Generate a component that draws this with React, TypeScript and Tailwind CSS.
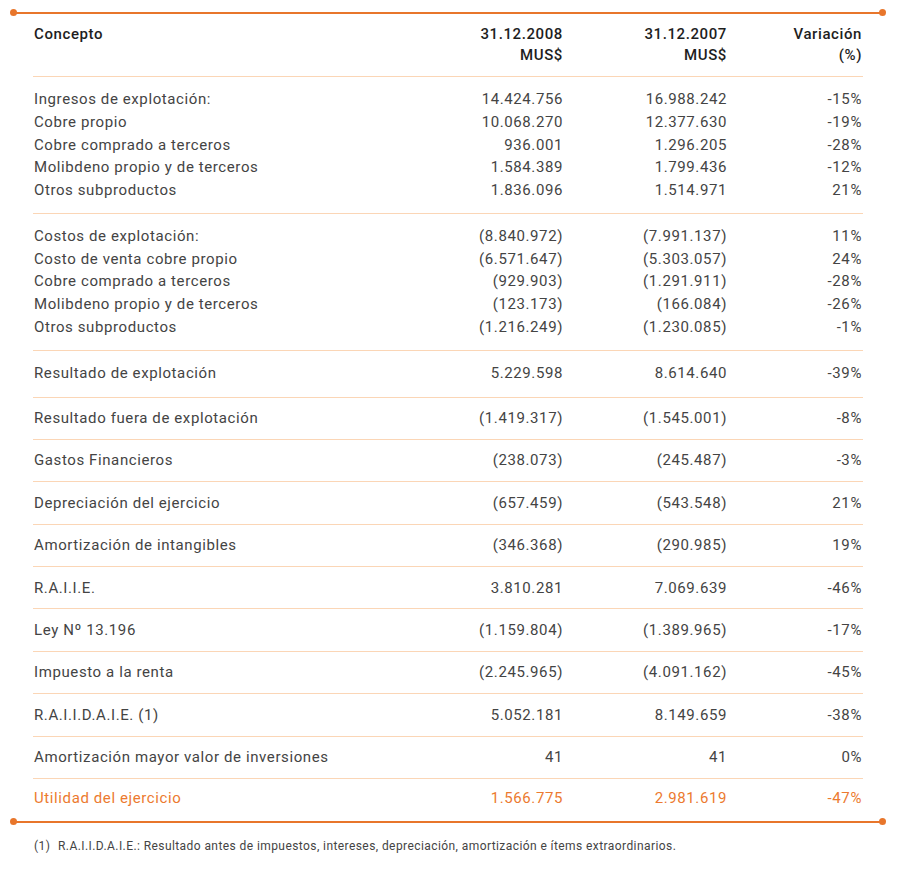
const font = { fontFamily: 'Roboto, "Liberation Sans", sans-serif' };

type Row = [string, string, string, string];

const grupoIngresos: Row[] = [
  ['Ingresos de explotación:', '14.424.756', '16.988.242', '-15%'],
  ['Cobre propio', '10.068.270', '12.377.630', '-19%'],
  ['Cobre comprado a terceros', '936.001', '1.296.205', '-28%'],
  ['Molibdeno propio y de terceros', '1.584.389', '1.799.436', '-12%'],
  ['Otros subproductos', '1.836.096', '1.514.971', '21%'],
];

const grupoCostos: Row[] = [
  ['Costos de explotación:', '(8.840.972)', '(7.991.137)', '11%'],
  ['Costo de venta cobre propio', '(6.571.647)', '(5.303.057)', '24%'],
  ['Cobre comprado a terceros', '(929.903)', '(1.291.911)', '-28%'],
  ['Molibdeno propio y de terceros', '(123.173)', '(166.084)', '-26%'],
  ['Otros subproductos', '(1.216.249)', '(1.230.085)', '-1%'],
];

const simples: Row[] = [
  ['Resultado de explotación', '5.229.598', '8.614.640', '-39%'],
  ['Resultado fuera de explotación', '(1.419.317)', '(1.545.001)', '-8%'],
  ['Gastos Financieros', '(238.073)', '(245.487)', '-3%'],
  ['Depreciación del ejercicio', '(657.459)', '(543.548)', '21%'],
  ['Amortización de intangibles', '(346.368)', '(290.985)', '19%'],
  ['R.A.I.I.E.', '3.810.281', '7.069.639', '-46%'],
  ['Ley Nº 13.196', '(1.159.804)', '(1.389.965)', '-17%'],
  ['Impuesto a la renta', '(2.245.965)', '(4.091.162)', '-45%'],
  ['R.A.I.I.D.A.I.E. (1)', '5.052.181', '8.149.659', '-38%'],
  ['Amortización mayor valor de inversiones', '41', '41', '0%'],
];

const cols = 'grid grid-cols-[minmax(0,1fr)_164px_164px_136px]';

function OrangeRule() {
  return (
    <div className="flex items-center">
      <div className="w-[7px] h-[7px] rounded-full bg-[#e8762b] shrink-0" />
      <div className="flex-1 h-[2px] bg-[#e8762b] -mx-[2px]" />
      <div className="w-[7px] h-[7px] rounded-full bg-[#e8762b] shrink-0" />
    </div>
  );
}

function Cells({ row }: { row: Row }) {
  return (
    <>
      <div className="pl-px">{row[0]}</div>
      <div className="text-right">{row[1]}</div>
      <div className="text-right">{row[2]}</div>
      <div className="text-right pr-px">{row[3]}</div>
    </>
  );
}

export default function App() {
  return (
    <div className="bg-white min-h-[869px] pt-[9px]" style={font}>
      <div className="ml-[10px] w-[876px]">
        <OrangeRule />
        <div className="px-[23px] text-[15px] tracking-[0.6px] text-[#444]">
          <div className={`${cols} pt-[8px] pb-[10px] leading-[21px] text-[#1e1e1e] font-medium border-b border-[#fbd6b6]`}>
            <div className="pl-px">Concepto</div>
            <div className="text-right">31.12.2008<br />MUS$</div>
            <div className="text-right">31.12.2007<br />MUS$</div>
            <div className="text-right pr-px">Variación<br />(%)</div>
          </div>

          {[grupoIngresos, grupoCostos].map((grupo, g) => (
            <div key={g} className={`${cols} py-[11px] leading-[22.75px] border-b border-[#fbd6b6]`}>
              {grupo.map((r) => (
                <Cells key={r[0]} row={r} />
              ))}
            </div>
          ))}

          {simples.map((r, i) => (
            <div
              key={r[0]}
              className={`${cols} items-center border-b border-[#fbd6b6] ${i === 0 ? 'h-[47px]' : 'h-[42.4px]'}`}
            >
              <Cells row={r} />
            </div>
          ))}

          <div className={`${cols} items-center h-[39px] text-[#ec7a2f]`}>
            <Cells row={['Utilidad del ejercicio', '1.566.775', '2.981.619', '-47%']} />
          </div>
        </div>
        <OrangeRule />
        <div className="px-[23px] pt-[12px] text-[12px] tracking-[0.42px] text-[#444] flex">
          <span className="pl-px w-[25px]">(1)</span>
          <span>R.A.I.I.D.A.I.E.: Resultado antes de impuestos, intereses, depreciación, amortización e ítems extraordinarios.</span>
        </div>
      </div>
    </div>
  );
}
